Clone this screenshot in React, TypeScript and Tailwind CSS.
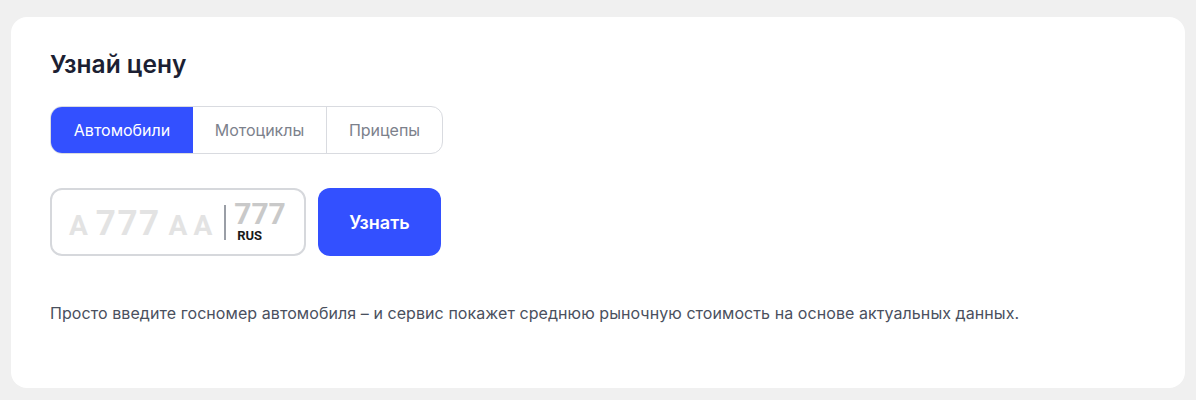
import { useState } from "react";

const tabs = ["Автомобили", "Мотоциклы", "Прицепы"];

// Блок «Узнай цену» с выбором типа ТС и полем госномера.
export default function App() {
  const [active, setActive] = useState(0);

  return (
    <div className="min-h-[400px] bg-[#f0f0f0] px-[11px] pt-[17px] pb-3 font-['Inter',sans-serif]">
      <div className="h-[371px] rounded-2xl bg-white px-[39px] pt-[31px]">
        <h2 className="text-[24.5px] leading-8 font-semibold text-[#1c1f33]">
          Узнай цену
        </h2>

        <div className="mt-[26px] flex h-12 w-[393px] overflow-hidden rounded-xl border border-[#d9dbe0]">
          {tabs.map((tab, i) => (
            <button
              key={tab}
              onClick={() => setActive(i)}
              className={
                i === active
                  ? "h-full w-[142px] bg-[#3350ff] text-[16px] text-white"
                  : i === 1
                    ? "h-full w-[134px] border-r border-[#d9dbe0] text-[16px] text-[#7c818c]"
                    : "h-full flex-1 text-[16px] text-[#7c818c]"
              }
            >
              {tab}
            </button>
          ))}
        </div>

        <div className="mt-[34px] flex gap-3">
          {/* поле госномера: буквы мельче цифр, как на настоящем номере */}
          <div className="flex h-[68px] w-[256px] items-center rounded-xl border-2 border-[#d6d8dc] pl-[17px] font-['Roboto',sans-serif] font-bold">
            <div className="mt-[4px] flex items-baseline leading-[35px] text-[#e3e3e3]">
              <span className="text-[28px]">А</span>
              <span className="ml-[8px] text-[35px] tracking-[1.5px]">777</span>
              <span className="ml-[8px] text-[28px] tracking-[6px]">АА</span>
            </div>
            <div className="ml-[6px] h-[35px] w-[2px] bg-[#9a9ea6]" />
            <div className="ml-[8px] flex flex-col items-start">
              <span className="text-[30px] leading-[25px] text-[#c9c9c9]">
                777
              </span>
              <span className="mt-[3px] ml-[3px] text-[13px] leading-[14px] text-[#1a1a1a]">
                RUS
              </span>
            </div>
          </div>
          <button className="h-[68px] w-[123px] rounded-xl bg-[#3350ff] text-[18px] font-semibold text-white">
            Узнать
          </button>
        </div>

        <p className="mt-[45px] text-[16px] tracking-[0.07px] text-[#4a505e]">
          Просто введите госномер автомобиля – и сервис покажет среднюю рыночную стоимость на основе актуальных данных.
        </p>
      </div>
    </div>
  );
}
